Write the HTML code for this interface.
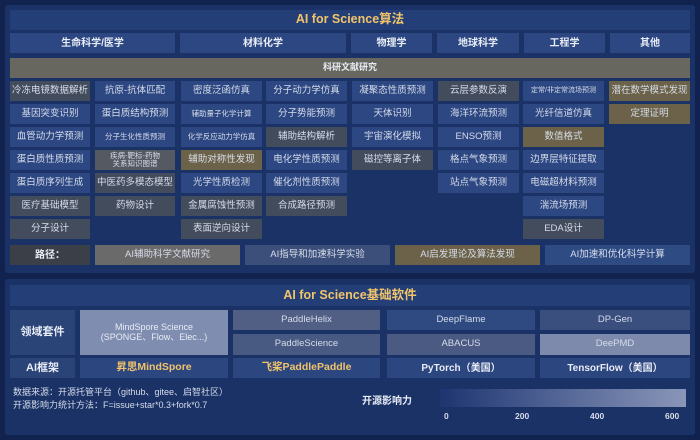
<!DOCTYPE html>
<html><head><meta charset="utf-8"><style>
*{margin:0;padding:0;box-sizing:border-box}
body{width:700px;height:440px;background:#10224d;font-family:"Liberation Sans","Noto Sans CJK SC",sans-serif;position:relative;overflow:hidden}
.p{position:absolute;background:#1a3266;border-radius:3px}
.c{position:absolute;display:flex;align-items:center;justify-content:center;text-align:center;color:#d6dcea;font-size:9.5px;background:#2c4782;line-height:1.1;white-space:nowrap;overflow:hidden}
.g{background:#434c5d}.o{background:#6b6249}.l{background:#555e70}
.b{font-weight:bold;color:#e8ecf5;font-size:10px}
.t{color:#f2c46a;font-weight:bold;font-size:12.5px;background:#243f78}
.s{font-size:7.5px}
</style></head><body>
<div class="p" style="left:5px;top:5px;width:690px;height:268px"></div>
<div class="p" style="left:5px;top:279px;width:690px;height:156px"></div>
<div class="c t" style="left:10px;top:10px;width:680px;height:20px">AI for Science算法</div>
<div class="c b" style="left:10px;top:33px;width:165px;height:20px">生命科学/医学</div>
<div class="c b" style="left:180px;top:33px;width:166px;height:20px">材料化学</div>
<div class="c b" style="left:351px;top:33px;width:81px;height:20px">物理学</div>
<div class="c b" style="left:437px;top:33px;width:82px;height:20px">地球科学</div>
<div class="c b" style="left:524px;top:33px;width:81px;height:20px">工程学</div>
<div class="c b" style="left:610px;top:33px;width:80px;height:20px">其他</div>
<div class="c b" style="left:10px;top:58px;width:680px;height:20px;background:#67675f;font-size:9px">科研文献研究</div>

<div class="c g" style="left:10px;top:81px;width:80px;height:20px">冷冻电镜数据解析</div>
<div class="c" style="left:10px;top:104px;width:80px;height:20px">基因突变识别</div>
<div class="c" style="left:10px;top:127px;width:80px;height:20px">血管动力学预测</div>
<div class="c" style="left:10px;top:150px;width:80px;height:20px">蛋白质性质预测</div>
<div class="c" style="left:10px;top:173px;width:80px;height:20px">蛋白质序列生成</div>
<div class="c g" style="left:10px;top:196px;width:80px;height:20px">医疗基础模型</div>
<div class="c g" style="left:10px;top:219px;width:80px;height:20px">分子设计</div>

<div class="c" style="left:95px;top:81px;width:80px;height:20px">抗原-抗体匹配</div>
<div class="c" style="left:95px;top:104px;width:80px;height:20px">蛋白质结构预测</div>
<div class="c s" style="left:95px;top:127px;width:80px;height:20px">分子生化性质预测</div>
<div class="c g s" style="left:95px;top:150px;width:80px;height:20px;background:#555a62">疾病-靶标-药物<br>关系知识图谱</div>
<div class="c g" style="left:95px;top:173px;width:80px;height:20px">中医药多模态模型</div>
<div class="c g" style="left:95px;top:196px;width:80px;height:20px">药物设计</div>

<div class="c" style="left:181px;top:81px;width:81px;height:20px">密度泛函仿真</div>
<div class="c s" style="left:181px;top:104px;width:81px;height:20px">辅助量子化学计算</div>
<div class="c s" style="left:181px;top:127px;width:81px;height:20px">化学反应动力学仿真</div>
<div class="c o" style="left:181px;top:150px;width:81px;height:20px">辅助对称性发现</div>
<div class="c" style="left:181px;top:173px;width:81px;height:20px">光学性质检测</div>
<div class="c g" style="left:181px;top:196px;width:81px;height:20px">金属腐蚀性预测</div>
<div class="c g" style="left:181px;top:219px;width:81px;height:20px">表面逆向设计</div>

<div class="c" style="left:266px;top:81px;width:81px;height:20px">分子动力学仿真</div>
<div class="c" style="left:266px;top:104px;width:81px;height:20px">分子势能预测</div>
<div class="c g" style="left:266px;top:127px;width:81px;height:20px">辅助结构解析</div>
<div class="c" style="left:266px;top:150px;width:81px;height:20px">电化学性质预测</div>
<div class="c" style="left:266px;top:173px;width:81px;height:20px">催化剂性质预测</div>
<div class="c g" style="left:266px;top:196px;width:81px;height:20px">合成路径预测</div>

<div class="c" style="left:352px;top:81px;width:81px;height:20px">凝聚态性质预测</div>
<div class="c" style="left:352px;top:104px;width:81px;height:20px">天体识别</div>
<div class="c" style="left:352px;top:127px;width:81px;height:20px">宇宙演化模拟</div>
<div class="c g" style="left:352px;top:150px;width:81px;height:20px">磁控等离子体</div>

<div class="c g" style="left:438px;top:81px;width:81px;height:20px">云层参数反演</div>
<div class="c" style="left:438px;top:104px;width:81px;height:20px">海洋环流预测</div>
<div class="c" style="left:438px;top:127px;width:81px;height:20px">ENSO预测</div>
<div class="c" style="left:438px;top:150px;width:81px;height:20px">格点气象预测</div>
<div class="c" style="left:438px;top:173px;width:81px;height:20px">站点气象预测</div>

<div class="c s" style="left:523px;top:81px;width:81px;height:20px;font-size:7px">定常/非定常流场预测</div>
<div class="c" style="left:523px;top:104px;width:81px;height:20px">光纤信道仿真</div>
<div class="c o" style="left:523px;top:127px;width:81px;height:20px">数值格式</div>
<div class="c" style="left:523px;top:150px;width:81px;height:20px">边界层特征提取</div>
<div class="c" style="left:523px;top:173px;width:81px;height:20px">电磁超材料预测</div>
<div class="c" style="left:523px;top:196px;width:81px;height:20px">湍流场预测</div>
<div class="c g" style="left:523px;top:219px;width:81px;height:20px">EDA设计</div>

<div class="c o" style="left:609px;top:81px;width:81px;height:20px">潜在数学模式发现</div>
<div class="c o" style="left:609px;top:104px;width:81px;height:20px">定理证明</div>

<div class="c b" style="left:10px;top:245px;width:80px;height:20px;background:#3b3f47">路径：</div>
<div class="c" style="left:95px;top:245px;width:145px;height:20px;background:#6a6a6a">AI辅助科学文献研究</div>
<div class="c" style="left:245px;top:245px;width:145px;height:20px;background:#3c4f7a">AI指导和加速科学实验</div>
<div class="c" style="left:395px;top:245px;width:145px;height:20px;background:#6b6249">AI启发理论及算法发现</div>
<div class="c" style="left:545px;top:245px;width:145px;height:20px;background:#2e4b84">AI加速和优化科学计算</div>

<div class="c t" style="left:10px;top:285px;width:680px;height:21px">AI for Science基础软件</div>
<div class="c b" style="left:10px;top:310px;width:65px;height:45px;font-size:11px;background:#2a4478">领域套件</div>
<div class="c" style="left:80px;top:310px;width:148px;height:45px;background:#7f8db0;color:#e8ecf5;font-size:9px">MindSpore Science<br>(SPONGE、Flow、Elec...)</div>
<div class="c" style="left:233px;top:310px;width:147px;height:20px;background:#515f85">PaddleHelix</div>
<div class="c" style="left:233px;top:334px;width:147px;height:21px;background:#485a82">PaddleScience</div>
<div class="c" style="left:387px;top:310px;width:148px;height:20px;background:#2f4a80">DeepFlame</div>
<div class="c" style="left:387px;top:334px;width:148px;height:21px;background:#4a5a82">ABACUS</div>
<div class="c" style="left:540px;top:310px;width:150px;height:20px;background:#3a4f7e">DP-Gen</div>
<div class="c" style="left:540px;top:334px;width:150px;height:21px;background:#7d8aab">DeePMD</div>
<div class="c b" style="left:10px;top:358px;width:65px;height:20px;font-size:11px;background:#2a4478">AI框架</div>
<div class="c" style="left:80px;top:358px;width:148px;height:20px;color:#f2c46a;font-weight:bold;font-size:10.5px;background:#2c4680">昇思MindSpore</div>
<div class="c" style="left:233px;top:358px;width:147px;height:20px;color:#f2c46a;font-weight:bold;font-size:10.5px;background:#2c4680">飞桨PaddlePaddle</div>
<div class="c b" style="left:387px;top:358px;width:148px;height:20px;font-size:10px;background:#2c4680">PyTorch（美国）</div>
<div class="c b" style="left:540px;top:358px;width:150px;height:20px;font-size:10px;background:#2c4680">TensorFlow（美国）</div>
<div style="position:absolute;left:13px;top:386px;color:#d6dcea;font-size:9px;line-height:13px">数据来源：开源托管平台（github、gitee、启智社区）<br>开源影响力统计方法：F=issue+star*0.3+fork*0.7</div>
<div style="position:absolute;left:362px;top:392px;color:#e8ecf5;font-size:10px;font-weight:bold">开源影响力</div>
<div style="position:absolute;left:440px;top:389px;width:246px;height:18px;background:linear-gradient(90deg,#1d3570,#4a5d90 40%,#8a96b8)"></div>
<div style="position:absolute;top:411px;left:0;width:700px;color:#d6dcea;font-size:8.5px;font-weight:bold">
<span style="position:absolute;left:444px">0</span><span style="position:absolute;left:515px">200</span><span style="position:absolute;left:590px">400</span><span style="position:absolute;left:665px">600</span></div>
</body></html>
